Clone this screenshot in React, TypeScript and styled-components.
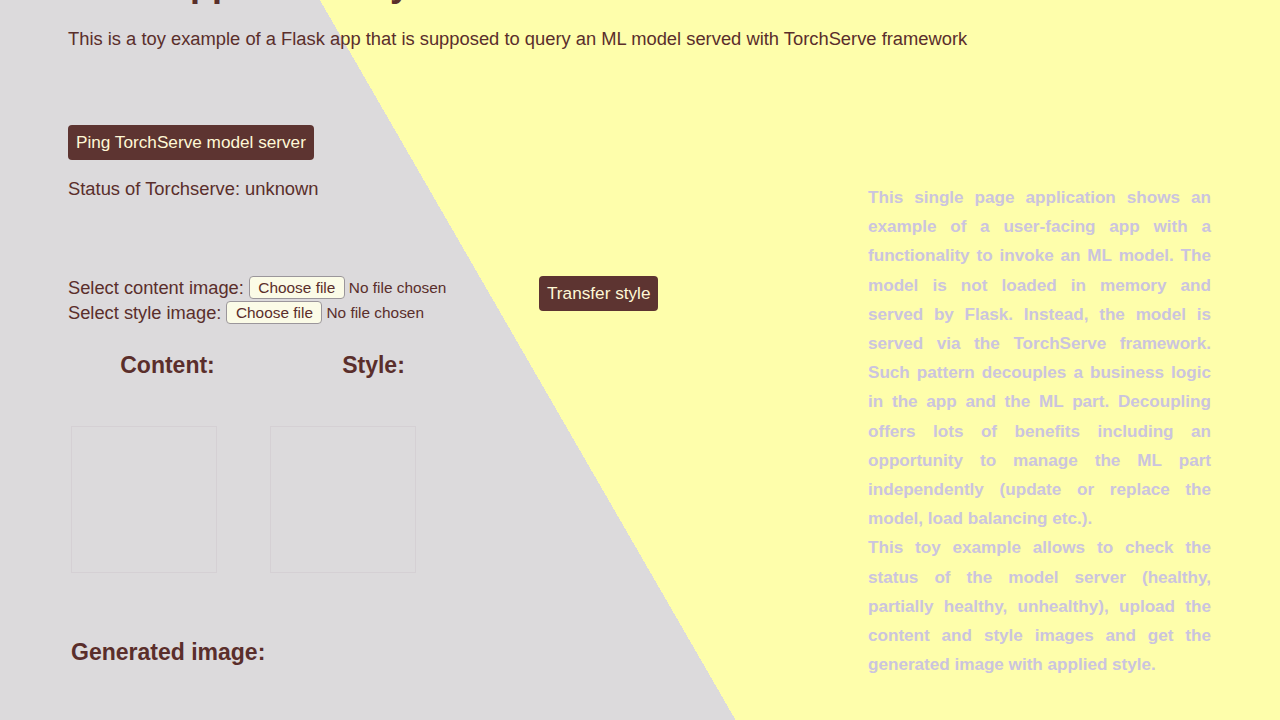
import { useState, ChangeEvent } from 'react';
import styled, { createGlobalStyle } from 'styled-components';

const colors = {
  text: '#5a2e2b',
  button: '#5d3431',
  buttonText: '#fff8d6',
  leftBg: '#dcdadc',
  rightBg: '#fefeab',
  faded: '#cbc4df'
};

const GlobalStyle = createGlobalStyle`
  html, body {
    margin: 0;
    padding: 0;
  }
  body {
    font-family: "Liberation Sans", Arial, Helvetica, sans-serif;
    color: ${colors.text};
  }
`;

const Page = styled.div`
  box-sizing: border-box;
  width: 1280px;
  height: 720px;
  overflow: hidden;
  padding-left: 68px;
  background: linear-gradient(60deg, ${colors.leftBg} 637px, ${colors.rightBg} 637px);
`;

const Title = styled.h1`
  margin: -37px 0 24px;
  font-size: 36px;
  line-height: 41px;
  font-weight: bold;
  white-space: nowrap;
`;

const Intro = styled.p`
  margin: 0;
  font-size: 18.35px;
  line-height: 21px;
`;

const Main = styled.div`
  display: flex;
  margin-top: 76px;
`;

const LeftPane = styled.div`
  width: 800px;
`;

const RightPane = styled.div`
  width: 343px;
  padding-top: 58px;
`;

const DarkButton = styled.button`
  display: block;
  margin: 0;
  padding: 7px 8px;
  border: none;
  border-radius: 4px;
  background: ${colors.button};
  color: ${colors.buttonText};
  font-family: inherit;
  font-size: 17.2px;
  line-height: 21px;
  cursor: pointer;
`;

const TransferButton = styled(DarkButton)`
  margin-top: 1px;
`;

const StatusText = styled.p`
  margin: 18px 0 0;
  font-size: 18.35px;
  line-height: 22px;
`;

const UploadForm = styled.form`
  display: flex;
  align-items: flex-start;
  margin-top: 75px;
`;

const FileFields = styled.div`
  width: 471px;
`;

const FileRow = styled.div`
  display: flex;
  align-items: center;
  height: 25px;
  font-size: 18.3px;
  white-space: nowrap;
`;

const FilePicker = styled.label`
  display: inline-flex;
  align-items: center;
  cursor: pointer;

  input {
    display: none;
  }
`;

const FileButton = styled.span`
  box-sizing: border-box;
  display: inline-flex;
  align-items: center;
  height: 23px;
  margin-left: 5px;
  padding: 0 8.5px;
  border: 1px solid #9b969b;
  border-radius: 4px;
  background: #fbfbe7;
  font-size: 15.4px;
`;

const FileName = styled.span`
  margin-left: 4px;
  font-size: 15.4px;
`;

const PreviewTable = styled.div`
  display: grid;
  grid-template-columns: 199px 213px;
  margin-top: 27px;
`;

const PreviewHeading = styled.h3`
  margin: 0;
  font-size: 23px;
  line-height: 27px;
  font-weight: bold;
  text-align: center;
`;

const PreviewBox = styled.div`
  width: 146px;
  height: 147px;
  margin: 47px 0 0 3px;
  box-sizing: border-box;
  border: 1px solid rgba(170, 150, 160, 0.14);
`;

const GeneratedHeading = styled.h3`
  margin: 66px 0 0 3px;
  font-size: 23px;
  line-height: 27px;
  font-weight: bold;
`;

const Description = styled.p`
  margin: 0;
  font-size: 17.1px;
  line-height: 29.2px;
  font-weight: bold;
  text-align: justify;
  color: ${colors.faded};
`;

type FileFieldProps = {
  label: string;
};

function FileField({ label }: FileFieldProps) {
  const [fileName, setFileName] = useState('');
  const handleChange = (e: ChangeEvent<HTMLInputElement>) => {
    const file = e.target.files && e.target.files[0];
    setFileName(file ? file.name : '');
  };
  return (
    <FileRow>
      {label}
      <FilePicker>
        <FileButton>Choose file</FileButton>
        <input type='file' accept='image/*' onChange={handleChange} />
      </FilePicker>
      <FileName>{fileName || 'No file chosen'}</FileName>
    </FileRow>
  );
}

export default function App() {
  const [status, setStatus] = useState('unknown');

  return (
    <>
      <GlobalStyle />
      <Page>
        <Title>Flask app with a toy model</Title>
        <Intro>
          This is a toy example of a Flask app that is supposed to query an ML model served with TorchServe framework
        </Intro>
        <Main>
          <LeftPane>
            <DarkButton type='button' onClick={() => setStatus('unknown')}>
              Ping TorchServe model server
            </DarkButton>
            <StatusText>Status of Torchserve: {status}</StatusText>

            <UploadForm onSubmit={(e) => e.preventDefault()}>
              <FileFields>
                <FileField label='Select content image:' />
                <FileField label='Select style image:' />
              </FileFields>
              <TransferButton type='submit'>Transfer style</TransferButton>
            </UploadForm>

            <PreviewTable>
              <PreviewHeading>Content:</PreviewHeading>
              <PreviewHeading>Style:</PreviewHeading>
              <PreviewBox />
              <PreviewBox />
            </PreviewTable>

            <GeneratedHeading>Generated image:</GeneratedHeading>
          </LeftPane>
          <RightPane>
            <Description>
              This single page application shows an example of a user-facing app with a functionality to invoke an ML
              model. The model is not loaded in memory and served by Flask. Instead, the model is served via the
              TorchServe framework. Such pattern decouples a business logic in the app and the ML part. Decoupling
              offers lots of benefits including an opportunity to manage the ML part independently (update or replace
              the model, load balancing etc.).
            </Description>
            <Description>
              This toy example allows to check the status of the model server (healthy, partially healthy, unhealthy),
              upload the content and style images and get the generated image with applied style.
            </Description>
          </RightPane>
        </Main>
      </Page>
    </>
  );
}
